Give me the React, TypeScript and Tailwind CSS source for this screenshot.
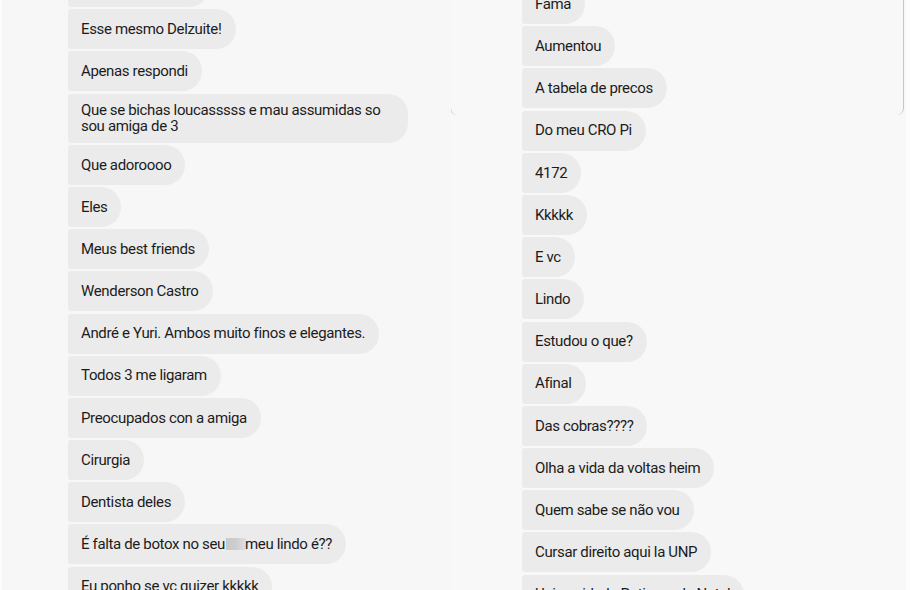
import React from 'react';

const LEFT = [
  'Ele mesmo amiga',
  'Esse mesmo Delzuite!',
  'Apenas respondi',
  'Que se bichas loucasssss e mau assumidas so sou amiga de 3',
  'Que adoroooo',
  'Eles',
  'Meus best friends',
  'Wenderson Castro',
  'André e Yuri. Ambos muito finos e elegantes.',
  'Todos 3 me ligaram',
  'Preocupados con a amiga',
  'Cirurgia',
  'Dentista deles',
  'REDACTED',
  'Eu ponho se vc quizer kkkkk',
];

const RIGHT = [
  'Fama',
  'Aumentou',
  'A tabela de precos',
  'Do meu CRO Pi',
  '4172',
  'Kkkkk',
  'E vc',
  'Lindo',
  'Estudou o que?',
  'Afinal',
  'Das cobras????',
  'Olha a vida da voltas heim',
  'Quem sabe se não vou',
  'Cursar direito aqui la UNP',
  'Universidade Potiguar de Natal',
];

function Bubble({ text }: { text: string }) {
  return (
    <div className="self-start max-w-[340px] min-h-[40px] flex items-center py-2 pl-[13px] pr-[14px] bg-[#ebebeb] rounded-l-[3px] rounded-r-[20px] text-[15px] tracking-[-0.35px] leading-[16.5px] text-[#1c1c1c]">
      {text === 'REDACTED' ? (
        <span>
          É falta de botox no seu
          <span className="inline-block align-middle w-[20px] h-[12px] ml-[1px] -mr-[1px] -mt-[3px] bg-gradient-to-r from-[#c9c9c9] via-[#cdcdcd] to-[#e0e0e0]" />
          meu lindo é??
        </span>
      ) : (
        <span>{text}</span>
      )}
    </div>
  );
}

export default function App() {
  return (
    <div className="w-[910px] h-[590px] overflow-hidden bg-[#fcfcfc] flex font-['Roboto',sans-serif]">
      {/* left screenshot */}
      <div className="w-[449px] ml-[2px] h-full bg-[#f7f7f7] pl-[66px] overflow-hidden">
        <div className="flex flex-col gap-[2.2px] -mt-[33px]">
          {LEFT.map((t, i) => (
            <Bubble key={i} text={t} />
          ))}
        </div>
      </div>

      {/* right screenshot */}
      <div className="relative w-[455px] h-full bg-[#f8f8f8] pl-[71px] overflow-hidden">
        <div className="absolute left-[-1px] top-0 w-[454px] h-[115px] border-x-[1.5px] border-[#c6c6c6] rounded-b-[7px] pointer-events-none" />
        <div className="flex flex-col gap-[2.2px] -mt-[16px]">
          {RIGHT.map((t, i) => (
            <Bubble key={i} text={t} />
          ))}
        </div>
      </div>
    </div>
  );
}
